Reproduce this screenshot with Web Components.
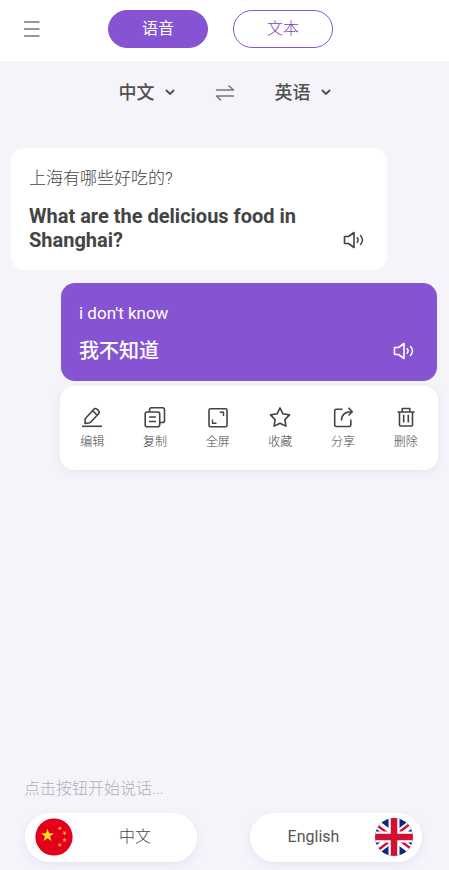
<!DOCTYPE html>
<html lang="zh-CN">
<head>
<meta charset="utf-8">
<meta name="viewport" content="width=device-width, initial-scale=1">
<title>语音翻译</title>
<style>
  body {
    margin: 0;
    background: #f5f4fa;
    color: #444;
    font-family: Roboto, "Noto Sans CJK SC", sans-serif;
    --accent: #8654d3;
  }
</style>
</head>
<body>
<translator-app></translator-app>

<script>
const base = `
  *, *::before { box-sizing: border-box; }
  button, select { font: inherit; color: inherit; border: 0; padding: 0; margin: 0; background: none; cursor: pointer; }
  svg { display: block; }
`;

function define(name, css, html) {
  const template = document.createElement('template');
  template.innerHTML = `<style>${base}${css}</style>${html}`;
  customElements.define(name, class extends HTMLElement {
    constructor() {
      super();
      this.attachShadow({ mode: 'open' }).append(template.content.cloneNode(true));
    }
  });
}

const icons = {
  menu: ['16 18', '<path d="M0 2H15.500M0 9H15.500M0 16H15.500" stroke-width="1.300"/>'],
  swap: ['20 18', '<path d="M1 6H18.500L13.500 1.500M19 12H1.500L6 16.500" stroke-width="1.500"/>'],
  speaker: ['22 18', '<path d="M1.500 5.500V12.500H5.500L11 16.500V1.500L5.500 5.500Z" stroke-width="1.600" stroke-linejoin="round"/><path d="M14.200 6.800Q16 9 14.200 11.200M17.600 4.500Q21.400 9 17.600 13.500" stroke-width="1.500" stroke-linecap="round"/>'],
  edit: ['22 22', '<path d="M1 20.300H21"/><path d="M4 17.500L4.200 12.700L12.800 3.200Q14.200 1.700 15.800 3.200L17.500 4.700Q19 6.200 17.600 7.700L9 16.800Z M11.500 4.700L16 9"/>'],
  copy: ['22 22', '<rect x="1.200" y="6" width="14.500" height="14.800" rx="2"/><path d="M5.600 6V3.500Q5.600 1.700 7.400 1.700H18.700Q20.500 1.700 20.500 3.500V14.700Q20.500 16.500 18.700 16.500H15.700M5 11H12M5 15.500H12"/>'],
  full: ['22 22', '<rect x="2" y="2.700" width="18" height="18" rx="1.500"/><path d="M12.800 6.200H16.500V10M5.500 13.500V17.300H9.500" stroke-width="1.400"/>'],
  star: ['22 22', '<path d="M11 1.900L13.900 7.800L20.500 8.900L15.900 13.600L16.900 20.100L11 17.200L5.100 20.100L6.100 13.600L1.500 8.900L8.100 7.800Z"/>'],
  share: ['22 22', '<path d="M10.500 3.200H4.200Q2.700 3.200 2.700 4.700V19Q2.700 20.500 4.200 20.500H17.300Q18.800 20.500 18.800 19V13.500M9.500 14.500Q9.500 5.700 19.800 5.700M16.500 1.800L20.300 5.700L16.500 9.500"/>'],
  trash: ['22 22', '<path d="M2.500 6H19.500M7.200 5.500V2.500H14.800V5.500M4.500 6V19Q4.500 20 5.500 20H16.500Q17.500 20 17.500 19V6M8.700 8.800V16.500M13.300 8.800V16.500"/>']
};

customElements.define('ui-icon', class extends HTMLElement {
  constructor() {
    super();
    this.attachShadow({ mode: 'open' });
  }
  connectedCallback() {
    const [size, shape] = icons[this.getAttribute('name')];
    const [w, h] = size.split(' ');
    this.shadowRoot.innerHTML = `<style>${base} :host { display: block; }</style>
      <svg width="${w}" height="${h}" viewBox="0 0 ${size}" fill="none" stroke="currentColor" stroke-width="1.600" stroke-linejoin="round" aria-hidden="true">${shape}</svg>`;
  }
});

const star = (x, y, r, turn) => {
  const points = [];
  for (let i = 0; i < 10; i++) {
    const a = (turn + i * 36 - 90) * Math.PI / 180;
    const d = i % 2 ? r * 0.4 : r;
    points.push(`${(x + d * Math.cos(a)).toFixed(2)},${(y + d * Math.sin(a)).toFixed(2)}`);
  }
  return `<polygon points="${points.join(' ')}"/>`;
};

define('flag-china', ':host { display: block; }', `
  <svg width="38" height="38" viewBox="0 0 38 38" aria-hidden="true">
    <circle cx="19" cy="19" r="18.600" fill="#e2001a"/>
    <g fill="#ffe11a">${star(12.5, 17.5, 6.8, 0)}</g>
    <g fill="#fbb03b">${star(24.8, 10.3, 2.4, 20)}${star(29.5, 15, 2.4, 40)}${star(29.5, 22, 2.4, 0)}${star(24.8, 27, 2.4, 20)}</g>
  </svg>`);

define('flag-britain', ':host { display: block; }', `
  <svg width="38" height="38" viewBox="0 0 38 38" aria-hidden="true">
    <clipPath id="round"><circle cx="19" cy="19" r="19"/></clipPath>
    <g clip-path="url(#round)">
      <rect width="38" height="38" fill="#0b2a7d"/>
      <path d="M-5 1L43 37M-5 37L43 1" stroke="#fff" stroke-width="8"/>
      <path d="M-5 2L19 20M43 0L19 18M-5 38L19 20M43 36L19 18" stroke="#d21034" stroke-width="2.400"/>
      <path d="M19 0V38M0 19H38" stroke="#fff" stroke-width="11"/>
      <path d="M19 0V38M0 19H38" stroke="#d21034" stroke-width="6.500"/>
    </g>
  </svg>`);

define('mode-tab', `
  :host { display: block; }
  button {
    width: 100px; height: 38px; border-radius: 19px;
    border: 1px solid var(--accent); color: #7445bd;
    font-size: 16px; line-height: 24px; font-weight: 300;
  }
  :host([selected]) button { background: var(--accent); color: #fff; font-weight: 400; }
`, '<button type="button"><slot></slot></button>');

define('app-header', `
  :host { display: block; background: #fff; }
  header { display: grid; grid-template-columns: 1fr auto 1fr; align-items: center; padding: 10px 32px 13px 24px; }
  .menu { justify-self: start; color: #777; }
  nav { display: flex; gap: 25px; }
`, `<header>
    <button class="menu" type="button" aria-label="菜单"><ui-icon name="menu"></ui-icon></button>
    <nav><mode-tab selected>语音</mode-tab><mode-tab>文本</mode-tab></nav>
  </header>`);

customElements.define('language-select', class extends HTMLElement {
  constructor() {
    super();
    const value = this.getAttribute('value');
    this.attachShadow({ mode: 'open' }).innerHTML = `<style>${base}
      :host { display: block; }
      label { display: grid; align-items: center; }
      select, svg { grid-area: 1 / 1; }
      select { appearance: none; padding-right: 20px; font-size: 18px; line-height: 28px; font-weight: 500; }
      svg { justify-self: end; pointer-events: none; }
    </style>
    <label>
      <select aria-label="${this.getAttribute('label')}">
        ${['中文', '英语'].map(t => `<option${t === value ? ' selected' : ''}>${t}</option>`).join('')}
      </select>
      <svg width="10" height="8" viewBox="0 0 10 8" fill="none" stroke="currentColor" stroke-width="1.900" aria-hidden="true"><path d="M1 1L5 5L9 1"/></svg>
    </label>`;
  }
});

define('language-bar', `
  :host { display: flex; justify-content: center; align-items: center; gap: 40px; padding: 18px 16px 16px; color: #505050; }
  button { color: #777; }
`, `<language-select label="源语言" value="中文"></language-select>
  <button type="button" aria-label="交换语言"><ui-icon name="swap"></ui-icon></button>
  <language-select label="目标语言" value="英语"></language-select>`);

define('message-card', `
  :host { display: block; margin-right: 51px; }
  article { display: flex; align-items: end; gap: 16px; padding: 18px 22px 18px 18px; border-radius: 14px; background: #fff; }
  .text { flex: 1; display: grid; gap: 14px; }
  p { margin: 0; line-height: 24px; }
  .source { font-size: 17px; font-weight: 300; }
  .result { font-size: 20px; font-weight: 700; }
  button { height: 24px; }
  :host([own]) { margin: 0 1px 0 50px; }
  :host([own]) article { background: var(--accent); color: #fff; }
  :host([own]) .source { font-weight: 400; }
  :host([own]) .result { font-weight: 500; }
`, `<article>
    <div class="text">
      <p class="source"><slot name="source"></slot></p>
      <p class="result"><slot></slot></p>
    </div>
    <button type="button" aria-label="朗读"><ui-icon name="speaker"></ui-icon></button>
  </article>`);

define('action-item', `
  :host { display: block; flex: 1; }
  button { width: 100%; display: grid; justify-items: center; gap: 5px; font-size: 12px; line-height: 18px; font-weight: 300; }
`, '<button type="button"><slot name="icon"></slot><slot></slot></button>');

define('action-panel', `
  :host {
    display: flex; margin-left: 49px; padding: 20px 1px 19px; border-radius: 14px;
    background: #fff; box-shadow: 0 2px 10px rgba(110, 90, 190, 0.1);
  }
`, [['edit', '编辑'], ['copy', '复制'], ['full', '全屏'], ['star', '收藏'], ['share', '分享'], ['trash', '删除']]
  .map(([icon, text]) => `<action-item><ui-icon slot="icon" name="${icon}"></ui-icon>${text}</action-item>`).join(''));

define('talk-button', `
  :host { display: block; flex: 0 1 172px; }
  button {
    width: 100%; display: flex; align-items: center; padding: 5px 0 6px 10px; border-radius: 25px;
    background: #fff; box-shadow: 0 3px 10px rgba(110, 90, 190, 0.1);
    font-size: 16px; line-height: 24px; font-weight: 300;
  }
  .name { flex: 1; text-align: center; }
  :host([end]) button { flex-direction: row-reverse; padding: 5px 9px 6px 2px; font-weight: 400; color: #555; }
`, '<button type="button"><slot name="flag"></slot><span class="name"><slot></slot></span></button>');

define('talk-footer', `
  :host { display: block; padding: 0 27px 8px 24px; }
  p { margin: 0 0 12px; color: #b0afb6; font-size: 16px; line-height: 24px; font-weight: 300; }
  div { display: flex; justify-content: space-between; gap: 16px; padding-left: 1px; }
`, `<p>点击按钮开始说话...</p>
  <div>
    <talk-button><flag-china slot="flag"></flag-china>中文</talk-button>
    <talk-button end><flag-britain slot="flag"></flag-britain>English</talk-button>
  </div>`);

define('translator-app', `
  :host { display: flex; flex-direction: column; min-height: 100vh; }
  main { flex: 1; padding: 25px 11px; }
  message-card + message-card { margin-top: 13px; }
  action-panel { margin-top: 5px; }
`, `<app-header></app-header>
  <language-bar></language-bar>
  <main>
    <message-card><span slot="source">上海有哪些好吃的?</span>What are the delicious food in Shanghai?</message-card>
    <message-card own><span slot="source">i don't know</span>我不知道</message-card>
    <action-panel></action-panel>
  </main>
  <talk-footer></talk-footer>`);
</script>
</body>
</html>
